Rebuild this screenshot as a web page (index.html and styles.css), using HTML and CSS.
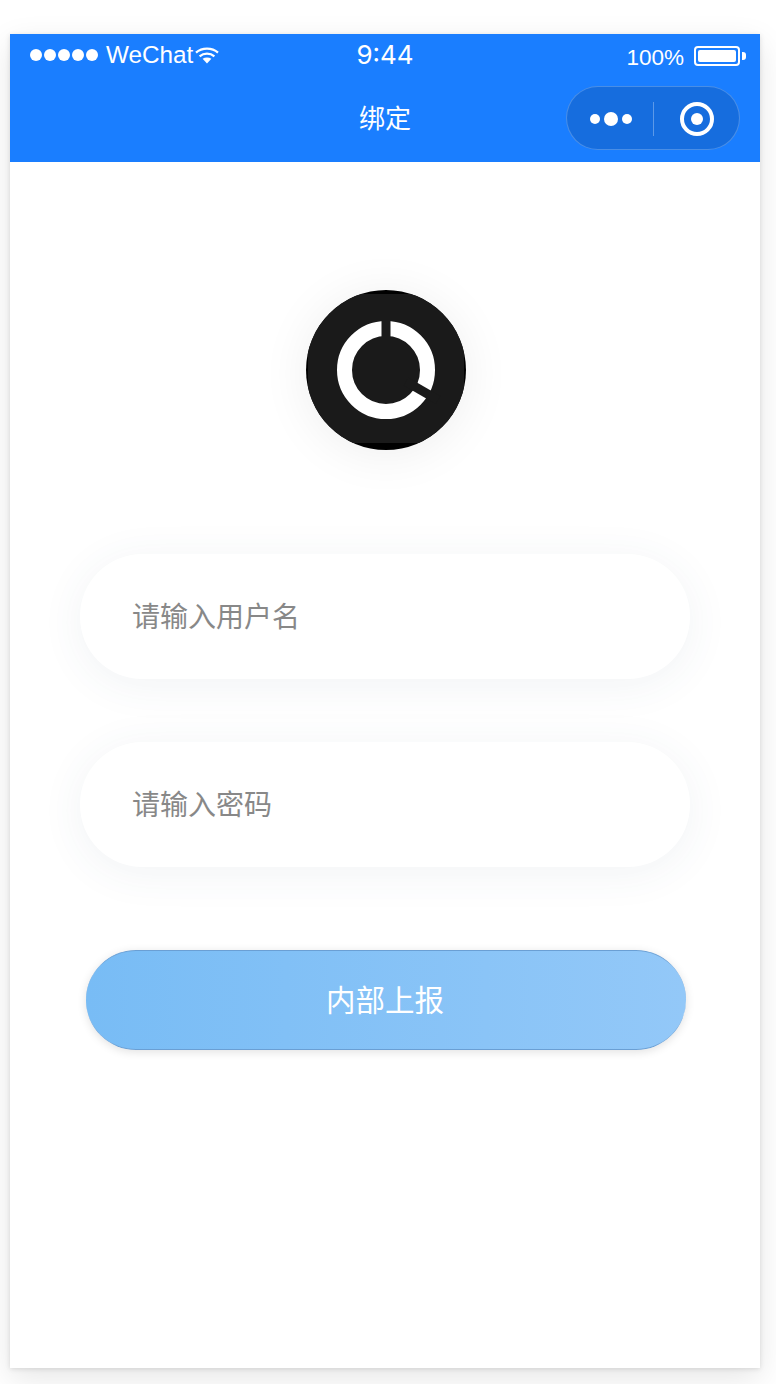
FILE: index.html
```html
<!DOCTYPE html>
<html lang="zh-CN">
<head>
<meta charset="utf-8">
<title>绑定</title>
<link rel="stylesheet" href="styles.css">
</head>
<body>
<div class="phone">
  <header class="header">
    <div class="status">
      <div class="status-left">
        <span class="dots"><i></i><i></i><i></i><i></i><i></i></span>
        <span class="carrier">WeChat</span>
        <svg class="wifi" width="24" height="18" viewBox="0 0 24 18"><path d="M1 6.600C7 1.200 17 1.200 23 6.600" fill="none" stroke="#fff" stroke-width="2.200"/><path d="M4.600 10.400C8.800 6.800 15.200 6.800 19.400 10.400" fill="none" stroke="#fff" stroke-width="2.200"/><path d="M7.600 12.800C10.200 11 13.800 11 16.400 12.800L12 17.400Z" fill="#fff"/></svg>
      </div>
      <div class="time">9:44</div>
      <div class="status-right">
        <span class="percent">100%</span>
        <span class="battery"><span class="battery-fill"></span></span>
        <span class="battery-tip"></span>
      </div>
    </div>
    <div class="nav">
      <div class="title">绑定</div>
      <div class="capsule">
        <div class="capsule-part capsule-part-left"><span class="more"><i></i><i class="big"></i><i></i></span></div>
        <div class="capsule-line"></div>
        <div class="capsule-part capsule-part-right"><span class="target"><i></i></span></div>
      </div>
    </div>
  </header>
  <main class="content">
    <div class="avatar">
      <svg width="160" height="160" viewBox="0 0 160 160">
        <rect width="160" height="160" fill="#000"/>
        <rect x="2" y="4" width="156" height="149" fill="#1a1a1a"/>
        <circle cx="80" cy="80" r="41.500" fill="none" stroke="#fff" stroke-width="15"/>
        <path d="M80 28V54" stroke="#1a1a1a" stroke-width="9"/>
        <path d="M100 91.500L132 110" stroke="#1a1a1a" stroke-width="9"/>
      </svg>
    </div>
    <div class="field"><span class="placeholder">请输入用户名</span></div>
    <div class="field field-second"><span class="placeholder">请输入密码</span></div>
    <button class="submit" type="button"><span class="submit-label">内部上报</span></button>
  </main>
</div>
</body>
</html>
```
FILE: styles.css
```css
* { box-sizing: border-box; }
html, body { margin: 0; height: 100%; background: #fff; }
body {
  padding: 34px 16px 16px 10px;
  font-family: "Noto Sans CJK SC", "Noto Sans", sans-serif;
  overflow: hidden;
}
.phone {
  width: 750px;
  height: 1334px;
  background: #fff;
  box-shadow: 0 10px 30px rgba(0, 0, 0, 0.1), 0 1px 5px rgba(0, 0, 0, 0.12);
}
.header { height: 128px; background: #1a7eff; color: #fff; }
.status {
  height: 42px;
  padding: 0 14px 0 20px;
  display: grid;
  grid-template-columns: 1fr auto 1fr;
  align-items: center;
}
.status-left { display: flex; align-items: center; }
.dots { display: flex; gap: 2px; margin-right: 8px; padding-top: 1px; }
.dots i { width: 12px; height: 12px; border-radius: 50%; background: #fff; }
.carrier { font: 24.300px/1 "Liberation Sans", Arial, sans-serif; }
.wifi { display: block; margin: 1px 0 0 2px; }
.time { font: 400 26px/1 Inter, "Liberation Sans", sans-serif; margin-left: -6px; }
.status-right { display: flex; align-items: center; justify-content: flex-end; padding-top: 2px; }
.percent { font: 22.500px/1 "Liberation Sans", Arial, sans-serif; margin-right: 10px; padding-top: 4px; }
.battery {
  width: 46px;
  height: 20px;
  border: 2px solid #fff;
  border-radius: 4px;
  padding: 2px;
  display: block;
}
.battery-fill { display: block; height: 100%; background: #fff; border-radius: 2px; }
.battery-tip { width: 4px; height: 8px; background: #fff; border-radius: 0 3px 3px 0; margin-left: 2px; }
.nav {
  height: 86px;
  position: relative;
  display: flex;
  align-items: center;
  justify-content: center;
}
.title { font-size: 26px; line-height: 1; position: relative; top: -2px; }
.capsule {
  position: absolute;
  right: 20px;
  top: 10px;
  width: 174px;
  height: 64px;
  padding-top: 1px;
  border-radius: 32px;
  background: rgba(0, 0, 0, 0.13);
  border: 1.500px solid rgba(255, 255, 255, 0.22);
  display: flex;
  align-items: center;
}
.capsule-part { flex: 1; display: flex; align-items: center; justify-content: center; }
.capsule-part-left { padding-left: 2px; }
.capsule-part-right { padding-left: 2px; }
.capsule-line { width: 1px; height: 34px; background: rgba(255, 255, 255, 0.3); }
.more { display: flex; align-items: center; gap: 4px; }
.more i { width: 10px; height: 10px; border-radius: 50%; background: #fff; }
.more i.big { width: 14px; height: 14px; }
.target {
  width: 34px;
  height: 34px;
  border: 4px solid #fff;
  border-radius: 50%;
  display: flex;
  align-items: center;
  justify-content: center;
}
.target i { width: 12px; height: 12px; border-radius: 50%; background: #fff; }
.content { display: flex; flex-direction: column; align-items: center; padding-top: 128px; }
.avatar {
  width: 160px;
  height: 160px;
  margin-left: 2px;
  border-radius: 50%;
  overflow: hidden;
  box-shadow: 0 4px 50px rgba(0, 0, 0, 0.07);
}
.avatar svg { display: block; }
.field {
  width: 610px;
  height: 125px;
  margin-top: 104px;
  border-radius: 62px;
  background: #fff;
  box-shadow: 0 6px 44px rgba(50, 80, 110, 0.07);
  padding-left: 52px;
  display: flex;
  align-items: center;
  color: #888;
  font-size: 28px;
  line-height: 1;
}
.placeholder { position: relative; top: -2px; }
.field-second { margin-top: 63px; }
.submit {
  width: 600px;
  height: 100px;
  margin: 83px 0 0 2px;
  border: 0;
  border-top: 1px solid #6a9fd4;
  border-bottom: 1px solid #6a9fd4;
  border-radius: 50px;
  background: linear-gradient(90deg, #78bcf5, #93c8f8);
  box-shadow: 0 2px 10px rgba(0, 0, 0, 0.12);
  color: #fff;
  font-family: inherit;
  font-size: 29.500px;
  padding: 0 2px 0 0;
}
.submit-label { position: relative; top: -2px; }
```
